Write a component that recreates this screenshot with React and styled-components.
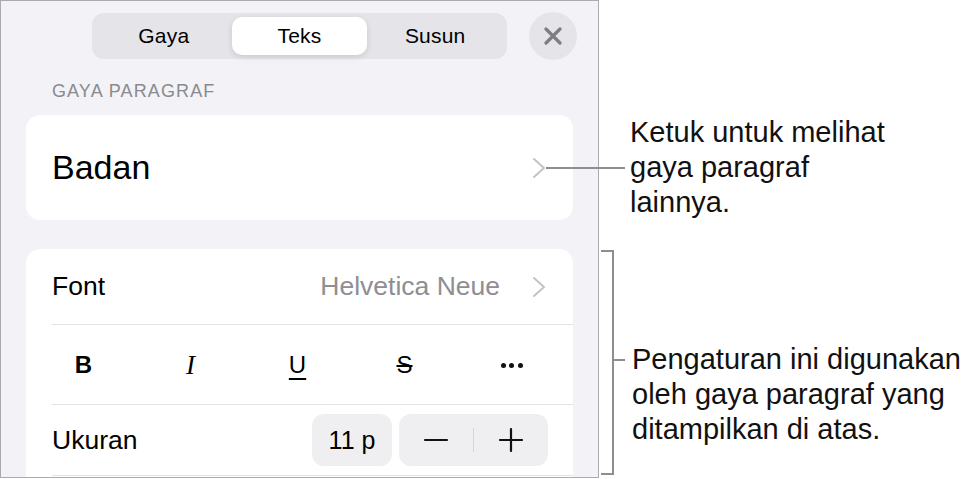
import React from "react";
import styled, { createGlobalStyle } from "styled-components";

const GlobalStyle = createGlobalStyle`
  body {
    margin: 0;
    background: #ffffff;
    font-family: "Liberation Sans", "Helvetica Neue", Arial, sans-serif;
    color: #000;
  }
`;

const Page = styled.div`
  position: relative;
  display: flex;
  width: 968px;
  height: 479px;
  overflow: hidden;
`;

const Panel = styled.div`
  box-sizing: border-box;
  width: 599px;
  height: 478px;
  flex-shrink: 0;
  border: 1px solid #ababab;
  background: #f2f2f7;
  display: flex;
  flex-direction: column;
  overflow: hidden;
`;

const Header = styled.div`
  display: flex;
  align-items: center;
  gap: 22px;
  padding: 11px 0 0 91px;
`;

const Segmented = styled.div`
  display: grid;
  grid-template-columns: repeat(3, 1fr);
  width: 415px;
  height: 46px;
  box-sizing: border-box;
  padding: 4px;
  border-radius: 12px;
  background: #e4e4e9;
`;

const Segment = styled.div`
  display: flex;
  align-items: center;
  justify-content: center;
  font-size: 21px;
  letter-spacing: 0.2px;
  border-radius: 10px;
  background: ${(p) => (p.$active ? "#ffffff" : "transparent")};
  box-shadow: ${(p) => (p.$active ? "0 2px 6px rgba(0,0,0,0.12)" : "none")};
`;

const CloseButton = styled.div`
  width: 48px;
  height: 48px;
  border-radius: 50%;
  background: #e4e4e9;
  display: flex;
  align-items: center;
  justify-content: center;
`;

const SectionLabel = styled.div`
  margin: 21px 0 0 51px;
  font-size: 18px;
  line-height: 21px;
  letter-spacing: 1.1px;
  color: #8a8a8e;
  text-transform: uppercase;
`;

const Card = styled.div`
  margin: ${(p) => p.$top}px 25px 0 25px;
  background: #ffffff;
  border-radius: 14px;
  flex-shrink: 0;
`;

const StyleRow = styled.div`
  height: 105px;
  display: flex;
  align-items: center;
  justify-content: space-between;
  padding: 0 27px 0 26px;
  font-size: 34px;
`;

const Row = styled.div`
  height: ${(p) => p.$h}px;
  display: flex;
  align-items: center;
  justify-content: space-between;
  margin-left: 26px;
  padding-right: ${(p) => p.$pr || 27}px;
  border-bottom: 1px solid #e3e3e6;
  font-size: 26.5px;
`;

const RowValue = styled.div`
  display: flex;
  align-items: center;
  gap: 32px;
  color: #8e8e93;
`;

const FormatRow = styled.div`
  display: grid;
  grid-template-columns: repeat(5, 107px);
  height: 80px;
  padding-left: 4px;
  position: relative;
  &::after {
    content: "";
    position: absolute;
    left: 26px;
    right: 0;
    bottom: 0;
    border-bottom: 1px solid #e3e3e6;
  }
`;

const FormatButton = styled.div`
  display: flex;
  align-items: center;
  justify-content: center;
  font-size: ${(p) => (p.$serif ? 27 : 24)}px;
  font-weight: ${(p) => (p.$bold ? 700 : 400)};
  font-style: ${(p) => (p.$italic ? "italic" : "normal")};
  font-family: ${(p) =>
    p.$serif ? '"Liberation Serif", "Times New Roman", serif' : "inherit"};
  text-decoration: ${(p) => p.$deco || "none"};
  text-decoration-thickness: 1.5px;
  text-underline-offset: 5px;
`;

const Dots = styled.div`
  display: flex;
  gap: 3.5px;
  span {
    width: 5px;
    height: 5px;
    border-radius: 50%;
    background: #111;
  }
`;

const SizeControls = styled.div`
  display: flex;
  gap: 7px;
`;

const SizeBox = styled.div`
  width: 80px;
  height: 52px;
  border-radius: 12px;
  background: #efeff1;
  display: flex;
  align-items: center;
  justify-content: center;
  font-size: 25px;
`;

const Stepper = styled.div`
  width: 149px;
  height: 52px;
  border-radius: 12px;
  background: #efeff1;
  display: flex;
  align-items: center;
`;

const StepHalf = styled.div`
  flex: 1;
  display: flex;
  align-items: center;
  justify-content: center;
`;

const StepDivider = styled.div`
  width: 1px;
  height: 24px;
  background: #d6d6da;
`;

const Notes = styled.div`
  display: flex;
  flex-direction: column;
  padding-left: 31px;
`;

const Note = styled.div`
  margin-top: ${(p) => p.$top}px;
  margin-left: ${(p) => p.$left || 0}px;
  font-size: 29px;
  line-height: 35px;
  white-space: nowrap;
  color: #111;
`;

const HLine = styled.div`
  position: absolute;
  left: ${(p) => p.$x}px;
  top: ${(p) => p.$y}px;
  width: ${(p) => p.$w}px;
  height: 2px;
  background: #8e8e8e;
`;

const Bracket = styled.div`
  position: absolute;
  left: 601px;
  top: 250px;
  width: 11px;
  height: 221px;
  border: 2px solid #8e8e8e;
  border-left: none;
`;

const Chevron = () => (
  <svg width="14" height="22" viewBox="0 0 14 22" fill="none">
    <path d="M2 2 L12 11 L2 20" stroke="#c4c4c7" strokeWidth="2" strokeLinecap="round" strokeLinejoin="round" />
  </svg>
);

const CloseIcon = () => (
  <svg width="18" height="18" viewBox="0 0 18 18">
    <path d="M2 2 L16 16 M16 2 L2 16" stroke="#7d7d82" strokeWidth="3.2" strokeLinecap="round" />
  </svg>
);

const Minus = () => (
  <svg width="26" height="26" viewBox="0 0 26 26">
    <path d="M2 13 H24" stroke="#111" strokeWidth="2.2" strokeLinecap="round" />
  </svg>
);

const Plus = () => (
  <svg width="26" height="26" viewBox="0 0 26 26">
    <path d="M2 13 H24 M13 2 V24" stroke="#111" strokeWidth="2.2" strokeLinecap="round" />
  </svg>
);

export default function App() {
  return (
    <>
      <GlobalStyle />
      <Page>
        <Panel>
          <Header>
            <Segmented>
              <Segment>Gaya</Segment>
              <Segment $active>Teks</Segment>
              <Segment>Susun</Segment>
            </Segmented>
            <CloseButton>
              <CloseIcon />
            </CloseButton>
          </Header>
          <SectionLabel>Gaya Paragraf</SectionLabel>
          <Card $top={13}>
            <StyleRow>
              Badan
              <Chevron />
            </StyleRow>
          </Card>
          <Card $top={29}>
            <Row $h={75}>
              Font
              <RowValue>
                Helvetica Neue
                <Chevron />
              </RowValue>
            </Row>
            <FormatRow>
              <FormatButton $bold>B</FormatButton>
              <FormatButton $italic $serif>I</FormatButton>
              <FormatButton $deco="underline">U</FormatButton>
              <FormatButton $deco="line-through">S</FormatButton>
              <FormatButton>
                <Dots>
                  <span />
                  <span />
                  <span />
                </Dots>
              </FormatButton>
            </FormatRow>
            <Row $h={70} $pr={25}>
              Ukuran
              <SizeControls>
                <SizeBox>11 p</SizeBox>
                <Stepper>
                  <StepHalf>
                    <Minus />
                  </StepHalf>
                  <StepDivider />
                  <StepHalf>
                    <Plus />
                  </StepHalf>
                </Stepper>
              </SizeControls>
            </Row>
            <Row $h={40} />
          </Card>
        </Panel>
        <Notes>
          <Note $top={115}>
            Ketuk untuk melihat
            <br />
            gaya paragraf
            <br />
            lainnya.
          </Note>
          <Note $top={122} $left={2}>
            Pengaturan ini digunakan
            <br />
            oleh gaya paragraf yang
            <br />
            ditampilkan di atas.
          </Note>
        </Notes>
        <HLine $x={546} $y={167} $w={79} />
        <Bracket />
        <HLine $x={612} $y={359} $w={13} />
      </Page>
    </>
  );
}
